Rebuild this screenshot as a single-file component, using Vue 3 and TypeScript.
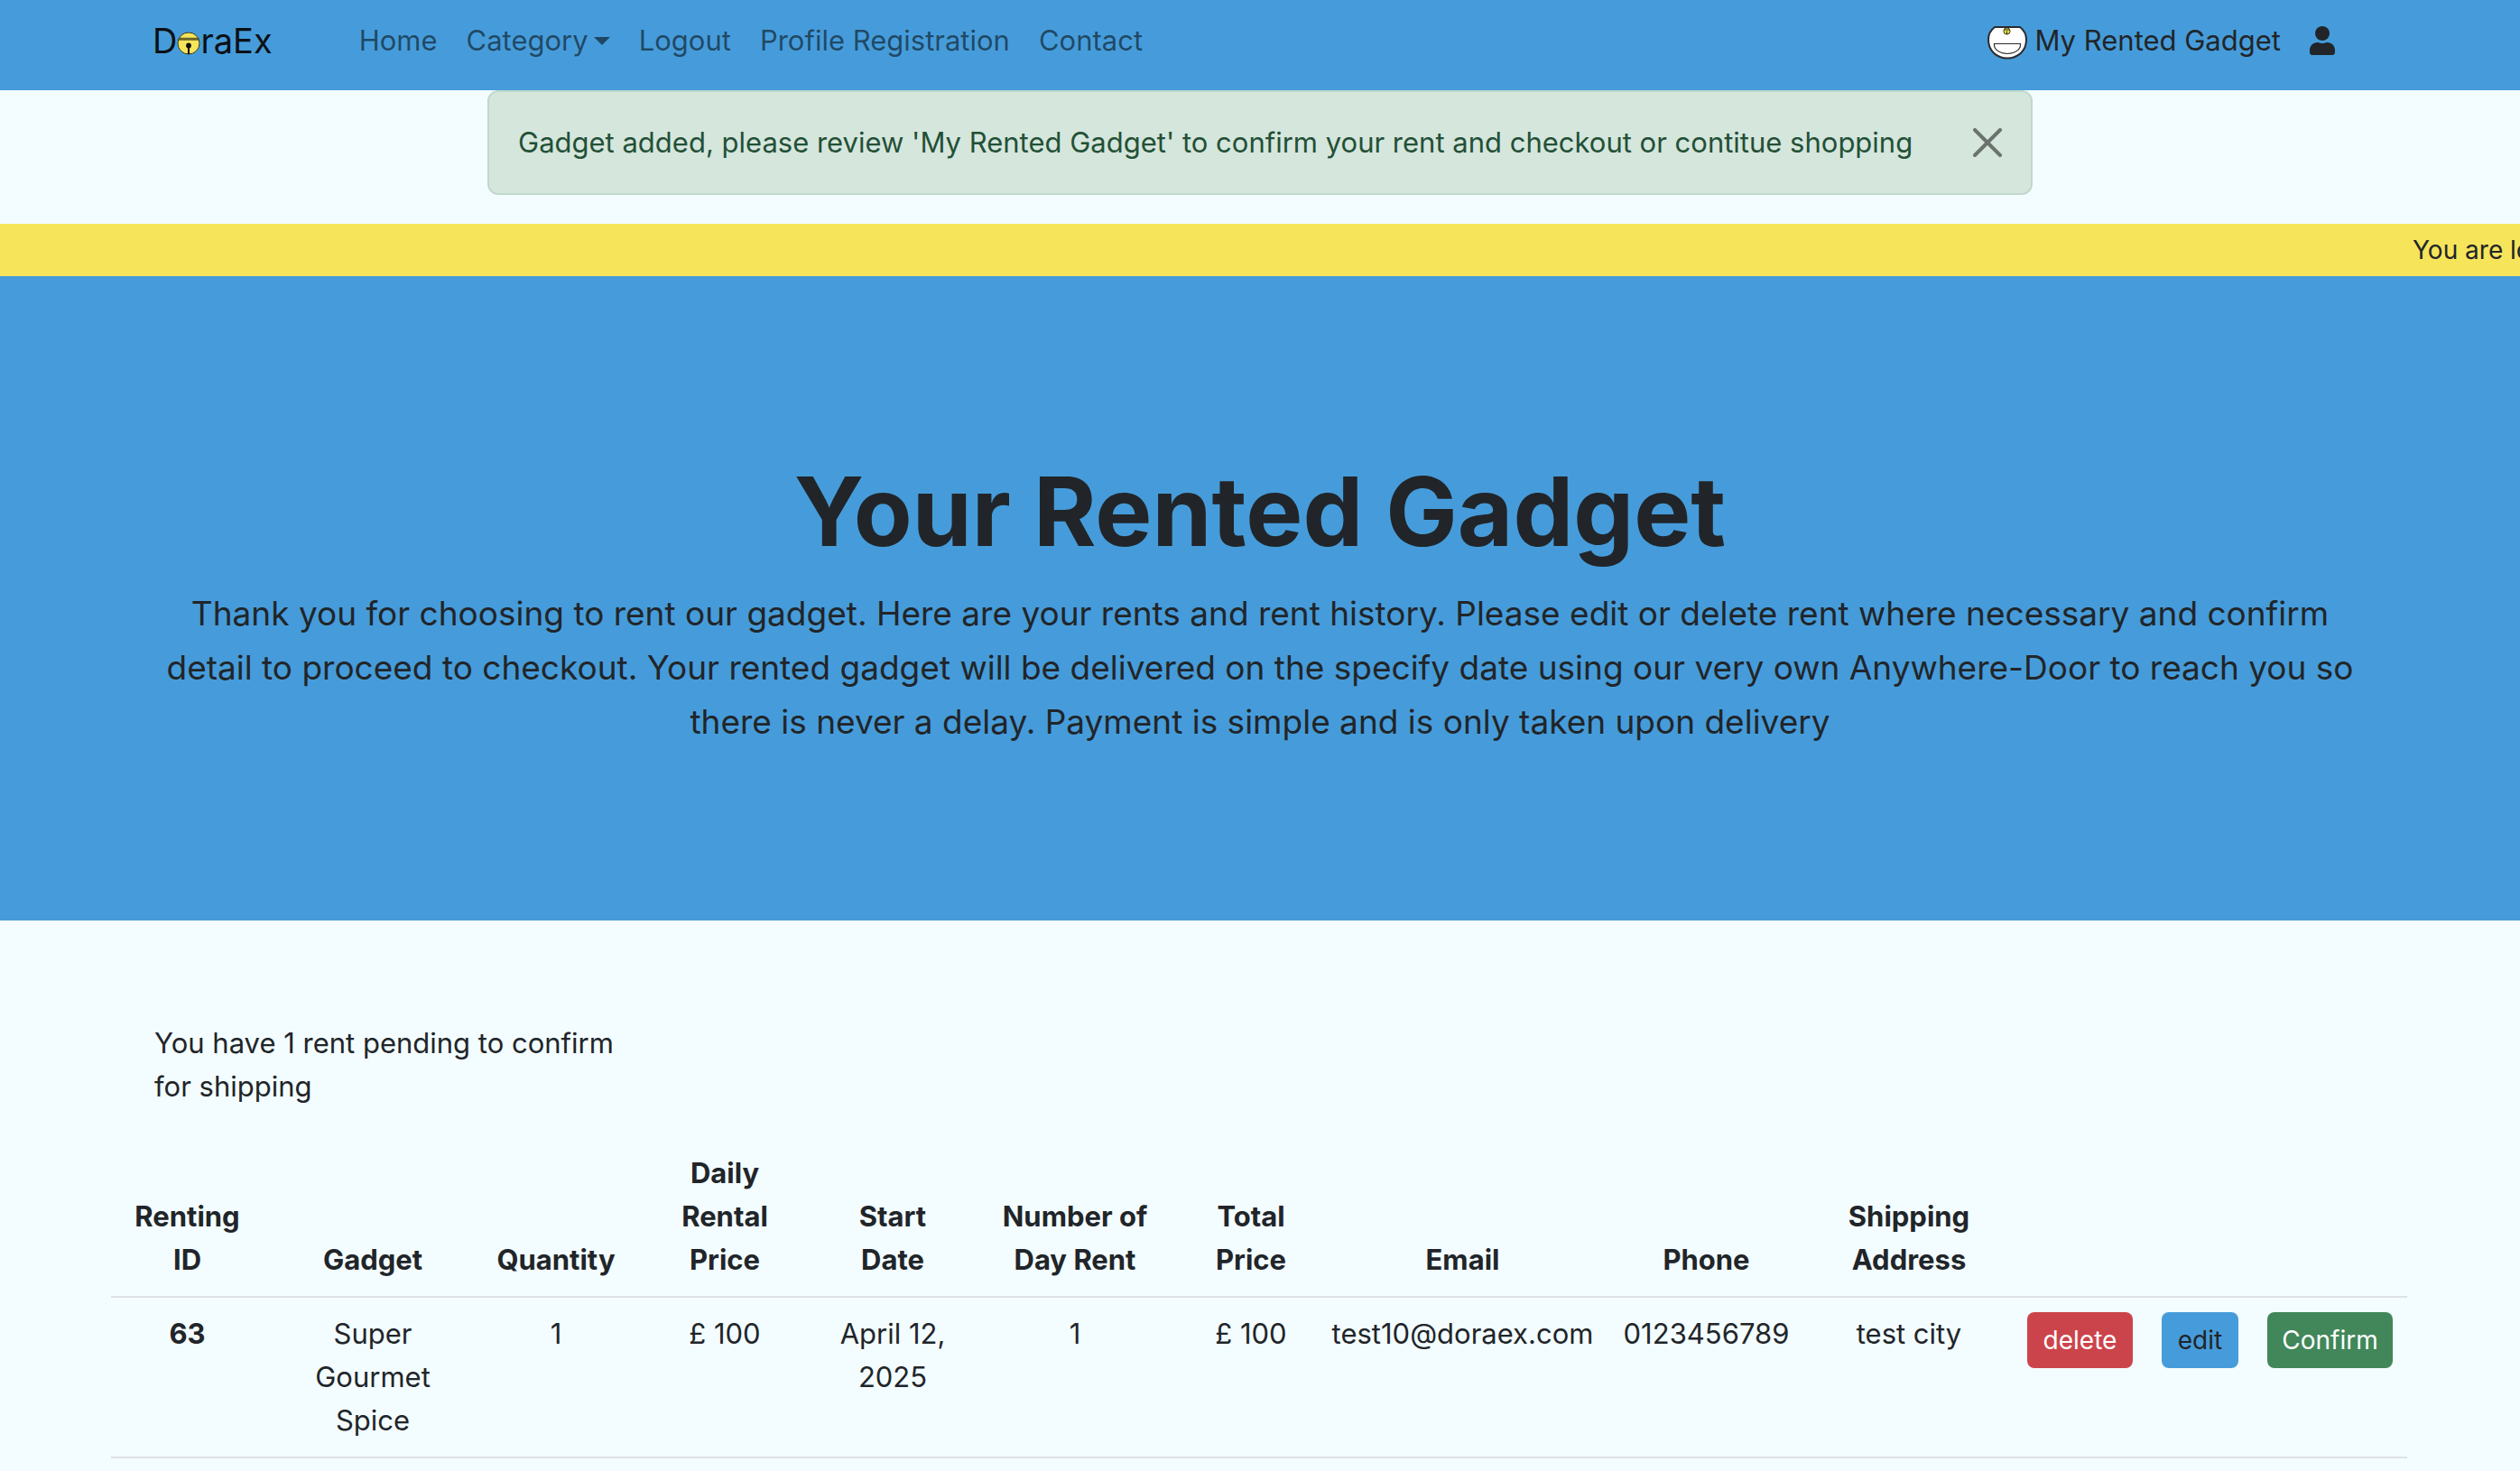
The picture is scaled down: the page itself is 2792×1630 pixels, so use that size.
<script setup lang="ts">
import { ref } from 'vue'

interface Column {
  label: string
  share: number
}

interface Rent {
  id: number
  gadget: string
  quantity: number
  dailyPrice: number
  startDate: string
  days: number
  totalPrice: number
  email: string
  phone: string
  address: string
}

const columns: Column[] = [
  { label: 'Renting ID', share: 169 },
  { label: 'Gadget', share: 242 },
  { label: 'Quantity', share: 164 },
  { label: 'Daily Rental Price', share: 210 },
  { label: 'Start Date', share: 162 },
  { label: 'Number of Day Rent', share: 242 },
  { label: 'Total Price', share: 148 },
  { label: 'Email', share: 321 },
  { label: 'Phone', share: 219 },
  { label: 'Shipping Address', share: 230 },
  { label: '', share: 149 },
  { label: '', share: 117 },
  { label: '', share: 171 },
]
const totalShare = columns.reduce((sum, c) => sum + c.share, 0)

const rents: Rent[] = [
  {
    id: 63,
    gadget: 'Super Gourmet Spice',
    quantity: 1,
    dailyPrice: 100,
    startDate: 'April 12, 2025',
    days: 1,
    totalPrice: 100,
    email: 'test10@doraex.com',
    phone: '0123456789',
    address: 'test city',
  },
]

const alertOpen = ref(true)
</script>

<template>
  <div class="page">
    <header class="navbar">
      <a class="brand" href="#" aria-label="DoraEx">
        <span>D</span>
        <svg class="bell" viewBox="0 0 26 26" aria-hidden="true">
          <circle cx="13" cy="13" r="12" fill="#f6e45a" stroke="#3b3a1c" stroke-width="1" />
          <path d="M2 7.200H24V9.300H1.500Z" fill="#6f6a26" stroke="#3b3a1c" stroke-width="0.600" />
          <circle cx="13" cy="15.500" r="2.900" fill="#111" />
          <path d="M13 16V25" stroke="#111" stroke-width="2" />
        </svg>
        <span>raEx</span>
      </a>
      <nav class="links">
        <a href="#">Home</a>
        <a href="#" class="dropdown">Category<span class="caret"></span></a>
        <a href="#">Logout</a>
        <a href="#">Profile Registration</a>
        <a href="#">Contact</a>
      </nav>
      <div class="account">
        <a class="rented" href="#">
          <svg class="pocket" viewBox="0 0 44 38" aria-hidden="true">
            <path d="M8 2H36C40 5 43 10 43 16C43 28 34 36.500 22 36.500S1 28 1 16C1 10 4 5 8 2Z" fill="#fff" stroke="#2b2a2e" stroke-width="2" stroke-linejoin="round" />
            <path d="M7.500 20.500H36.500V22C36.500 27 30 31.500 22 31.500S7.500 27 7.500 22Z" fill="#fff" stroke="#2b2a2e" stroke-width="1.200" />
            <circle cx="21.500" cy="6.500" r="3.600" fill="#e9dc4c" stroke="#3b3a1c" stroke-width="1" />
            <path d="M18 5H25M21.500 6.500V10" stroke="#3b3a1c" stroke-width="1" />
          </svg>
          My Rented Gadget
        </a>
        <a class="profile" href="#" aria-label="Profile">
          <svg viewBox="0 0 28 32" aria-hidden="true">
            <circle cx="14" cy="8" r="8" fill="#212529" />
            <path d="M8.400 18H9.400C12.300 19.300 15.700 19.300 18.600 18H19.600C24.200 18 28 21.800 28 26.400V29C28 30.700 26.700 32 25 32H3C1.300 32 0 30.700 0 29V26.400C0 21.800 3.800 18 8.400 18Z" fill="#212529" />
          </svg>
        </a>
      </div>
    </header>

    <div v-if="alertOpen" class="alert" role="alert">
      <span>Gadget added, please review 'My Rented Gadget' to confirm your rent and checkout or contitue shopping</span>
      <button type="button" class="close" aria-label="Close" @click="alertOpen = false">
        <svg viewBox="0 0 32 32" aria-hidden="true">
          <path d="M2 2L30 30M30 2L2 30" stroke="#6a736e" stroke-width="4" stroke-linecap="round" />
        </svg>
      </button>
    </div>

    <div class="ticker"><span>You are logged in</span></div>

    <section class="hero">
      <h1>Your Rented Gadget</h1>
      <p>
        Thank you for choosing to rent our gadget. Here are your rents and rent history. Please edit or delete rent where necessary and confirm detail to proceed to checkout. Your rented gadget will be delivered on the specify date using our very own Anywhere-Door to reach you so there is never a delay. Payment is simple and is only taken upon delivery
      </p>
    </section>

    <main>
      <p class="pending">You have 1 rent pending to confirm for shipping</p>
      <table>
        <colgroup>
          <col v-for="(c, i) in columns" :key="i" :style="{ width: (c.share / totalShare) * 100 + '%' }" />
        </colgroup>
        <thead>
          <tr>
            <th v-for="(c, i) in columns" :key="i" scope="col" :class="{ stacked: c.label === 'Daily Rental Price' }">
              <span>{{ c.label }}</span>
            </th>
          </tr>
        </thead>
        <tbody>
          <tr v-for="r in rents" :key="r.id">
            <th scope="row">{{ r.id }}</th>
            <td class="stacked"><span>{{ r.gadget }}</span></td>
            <td>{{ r.quantity }}</td>
            <td>£ {{ r.dailyPrice }}</td>
            <td>{{ r.startDate }}</td>
            <td>{{ r.days }}</td>
            <td>£ {{ r.totalPrice }}</td>
            <td class="tight">{{ r.email }}</td>
            <td class="tight">{{ r.phone }}</td>
            <td>{{ r.address }}</td>
            <td><button type="button" class="btn danger">delete</button></td>
            <td><button type="button" class="btn primary">edit</button></td>
            <td><button type="button" class="btn success">Confirm</button></td>
          </tr>
        </tbody>
      </table>
    </main>
  </div>
</template>

<style>
body {
  background: #f3fcfe;
}
</style>

<style scoped>
.page {
  font-family: Inter, "Liberation Sans", sans-serif;
  font-size: 31px;
  line-height: 48px;
  color: #212529;
  overflow: hidden;
}
a {
  color: inherit;
  text-decoration: none;
}
svg {
  display: block;
  flex: none;
  fill: none;
}
.navbar {
  display: flex;
  align-items: center;
  height: 100px;
  box-sizing: border-box;
  padding: 0 205px 10px 169px;
  background: #469cda;
}
.brand {
  display: flex;
  align-items: center;
  margin-right: 96px;
  font-size: 38px;
  color: #0b1116;
}
.bell {
  width: 26px;
  height: 26px;
  margin-top: 6px;
}
.links {
  display: flex;
  flex: 1;
  gap: 32px;
  color: rgba(0, 0, 0, 0.55);
}
.dropdown {
  display: flex;
  align-items: center;
  gap: 6px;
}
.caret {
  border: 9px solid transparent;
  border-top-color: currentColor;
  border-bottom: 0;
}
.account {
  display: flex;
  align-items: center;
  gap: 32px;
}
.rented {
  display: flex;
  align-items: center;
  gap: 8px;
}
.pocket {
  width: 44px;
  height: 38px;
  margin-top: 4px;
}
.profile svg {
  width: 28px;
  height: 32px;
}
.alert {
  display: flex;
  align-items: center;
  justify-content: space-between;
  box-sizing: border-box;
  width: fit-content;
  min-width: 1712px;
  margin: 0 auto 32px;
  padding: 32px;
  border: 2px solid #c0d9cc;
  border-radius: 12px;
  background: #d5e6dd;
  color: #235036;
}
.close {
  margin: 0 0 0 32px;
  padding: 0;
  border: 0;
  background: none;
  cursor: pointer;
}
.close svg {
  width: 32px;
  height: 32px;
}
.ticker {
  display: flex;
  justify-content: flex-end;
  overflow: hidden;
  padding: 8px 0;
  background: #f6e45a;
  font-size: 28px;
  line-height: 42px;
  white-space: nowrap;
}
.ticker span {
  width: 119px;
}
.hero {
  padding: 194px 172px 190px;
  background: #469cda;
  text-align: center;
}
.hero h1 {
  margin: 0 0 16px;
  font-size: 106px;
  font-weight: 700;
  line-height: 134px;
}
.hero p {
  margin: 0;
  font-size: 37px;
  line-height: 60px;
}
main {
  padding: 112px 125px 0 123px;
}
.pending {
  width: 540px;
  margin: 0 48px 32px;
}
table {
  width: 100%;
  border-collapse: separate;
  border-spacing: 0;
  table-layout: fixed;
  text-align: center;
}
th,
td {
  padding: 16px;
  border-bottom: 2px solid #dee2e6;
  vertical-align: top;
}
th {
  font-weight: 700;
}
thead th {
  vertical-align: bottom;
}
.tight {
  padding-right: 0;
  padding-left: 0;
  white-space: nowrap;
}
.stacked span {
  display: block;
  width: min-content;
  margin: 0 auto;
}
.btn {
  display: block;
  width: 100%;
  padding: 10px 0;
  border: 0;
  border-radius: 8px;
  font: inherit;
  font-size: 28px;
  line-height: 42px;
  cursor: pointer;
}
.danger {
  background: #cc444b;
  color: #fff;
}
.primary {
  background: #469cda;
  color: #212529;
}
.success {
  background: #41875a;
  color: #fff;
}
</style>
